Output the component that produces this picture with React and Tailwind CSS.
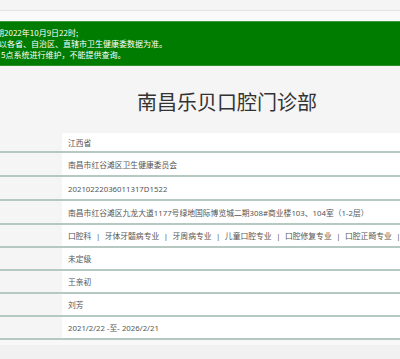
export default function App() {
  const rows = [
    { h: "h-[20px]", t: "江西省" },
    { h: "h-[24px]", t: "南昌市红谷滩区卫生健康委员会" },
    { h: "h-[24px]", t: "20210222036011317D1522" },
    { h: "h-[24px]", t: "南昌市红谷滩区九龙大道1177号绿地国际博览城二期308#商业楼103、104室（1-2层）" },
    { h: "h-[23px]", list: ["口腔科", "牙体牙髓病专业", "牙周病专业", "儿童口腔专业", "口腔修复专业", "口腔正畸专业", "口腔颌面外科专业"] },
    { h: "h-[23px]", t: "未定级" },
    { h: "h-[23px]", t: "王亲初" },
    { h: "h-[23px]", t: "刘芳" },
    { h: "h-[23px]", t: "2021/2/22 -至- 2026/2/21" },
  ];
  return (
    <div
      className="w-[400px] h-[359px] overflow-hidden bg-[#f3f3f3] flex flex-col"
      style={{ fontFamily: '"Noto Sans", "Noto Sans CJK SC", sans-serif' }}
    >
      <div className="h-[11px] bg-[#f5f5f5] border-b border-[#e4e4e4] shrink-0" />
      <div className="h-[10px] bg-[#fafafa] shrink-0" />
      <div
        className="h-[45px] shrink-0 bg-[#007d00] border-t border-[#3d9a3d] border-b border-b-[#2f8f2f] text-white text-[8px] leading-[11px] pt-[5px] whitespace-nowrap overflow-hidden"
        style={{ fontFamily: '"Noto Sans CJK SC", sans-serif' }}
      >
        <div className="-ml-[4px]">期2022年10月9日22时;</div>
        <div className="-ml-[1px]">以各省、自治区、直辖市卫生健康委数据为准。</div>
        <div className="ml-[1px]">5点系统进行维护，不能提供查询。</div>
      </div>
      <div
        className="h-[67px] shrink-0 bg-[#f5f5f5] flex items-center justify-center pl-[54px] pt-[5px] text-[20px] text-[#333] leading-none"
        style={{ fontFamily: '"Noto Sans CJK SC", sans-serif' }}
      >
        南昌乐贝口腔门诊部
      </div>
      <div className="shrink-0 flex flex-col">
        {rows.map((r, i) => (
          <div key={i} className={`${r.h} box-border flex border-b-2 border-[#b5c8c2]`}>
            <div className="w-[62px] shrink-0 bg-[#f5f5f5]" />
            <div className="flex-1 bg-white pl-[6px] flex items-center pt-[3px] text-[7.8px] text-[#555] whitespace-nowrap overflow-hidden">
              {r.list
                ? r.list.map((s, j) => (
                    <span key={j} className="flex items-center shrink-0">
                      {s}
                      {j < r.list.length - 1 && <span className="px-[4.5px]">|</span>}
                    </span>
                  ))
                : r.t}
            </div>
          </div>
        ))}
      </div>
      <div className="h-[5px] bg-[#f8f8f8] shrink-0" />
      <div className="flex-1 bg-[#f1f1f1]" />
    </div>
  );
}
